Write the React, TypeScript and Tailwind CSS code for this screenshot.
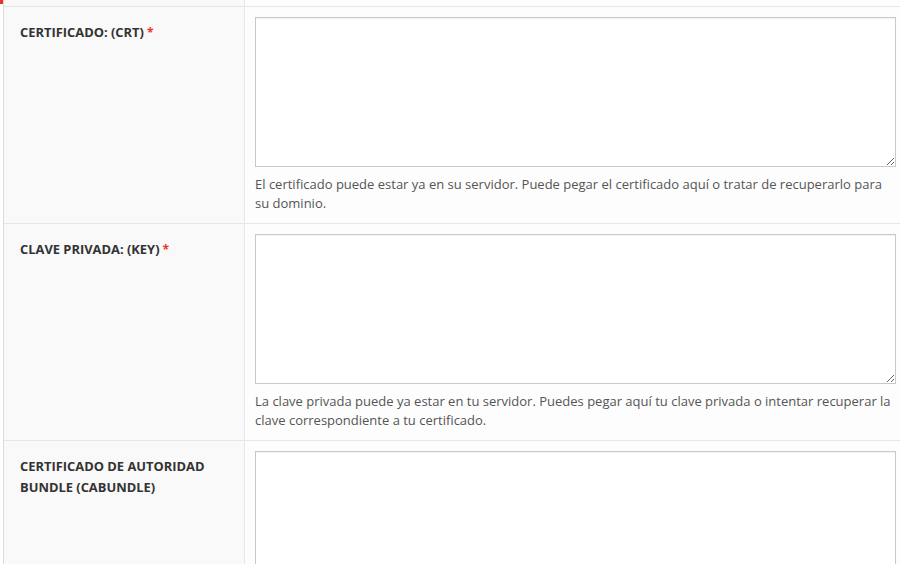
const rows = [
  {
    label: 'Certificado: (CRT)',
    required: true,
    help: 'El certificado puede estar ya en su servidor. Puede pegar el certificado aquí o tratar de recuperarlo para su dominio.',
  },
  {
    label: 'Clave privada: (KEY)',
    required: true,
    help: 'La clave privada puede ya estar en tu servidor. Puedes pegar aquí tu clave privada o intentar recuperar la clave correspondiente a tu certificado.',
  },
  {
    label: 'Certificado de Autoridad Bundle (CABUNDLE)',
    required: false,
    help: '',
  },
]

export default function App() {
  return (
    <div
      className="relative w-[900px] h-[564px] overflow-hidden bg-white"
      style={{ fontFamily: '"Open Sans", "Liberation Sans", sans-serif' }}
    >
      {/* tail of the asterisk from the row above */}
      <div className="absolute left-0 top-0 w-[3px] h-[4px] bg-[#e32]" />

      <div className="ml-[3px] w-[903px] border-l border-[#dcdcdc]">
        {/* previous row, scrolled mostly out of view */}
        <div className="grid grid-cols-[241px_1fr] h-[7px] border-b border-[#e6e6e6]">
          <div className="bg-[#f9f9f9] border-r border-[#e6e6e6]" />
          <div className="bg-[#fdfdfd]" />
        </div>

        {rows.map(row => (
          <div key={row.label} className="grid grid-cols-[241px_1fr] border-b border-[#e6e6e6]">
            <div className="bg-[#f9f9f9] border-r border-[#e6e6e6] pl-4 pr-6 pt-[15px] text-[12.9px] leading-[21px]">
              <span className="font-bold uppercase text-[#333]">{row.label}</span>
              {row.required && <span className="ml-[3px] text-[12px] font-bold text-[#e32]">*</span>}
            </div>
            <div className="bg-[#fdfdfd] pl-[10px] pr-[10px] pt-[10px] pb-[10px]">
              <textarea className="block w-[641px] h-[150px] bg-white border border-[#c9c9c9] shadow-[inset_0_1px_1px_rgba(0,0,0,0.06)] outline-none" />
              {row.help && (
                <p className="mt-2 w-[640px] text-[13px] leading-[19px] text-[#555]">{row.help}</p>
              )}
            </div>
          </div>
        ))}
      </div>
    </div>
  )
}
